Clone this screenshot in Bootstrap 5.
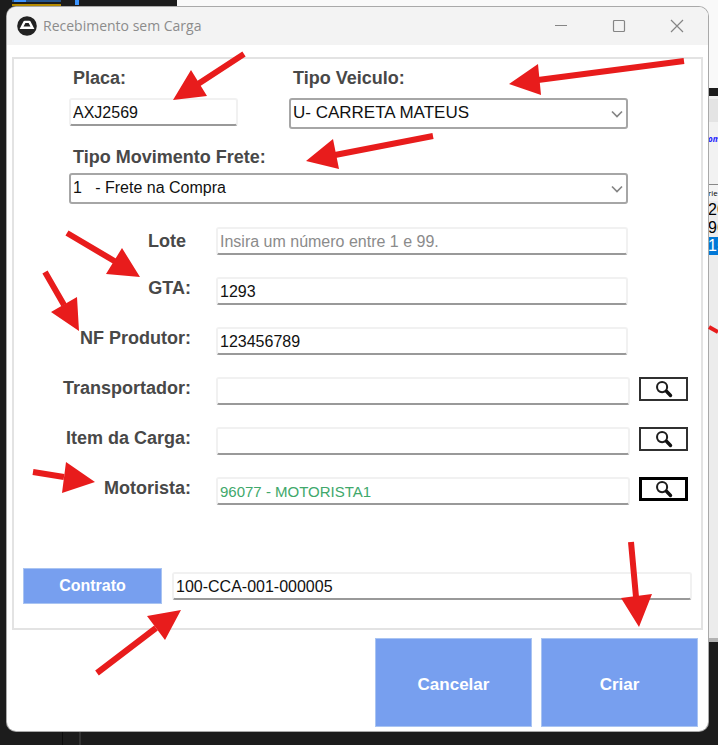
<!DOCTYPE html>
<html lang="pt-BR">
<head>
<meta charset="utf-8">
<meta name="viewport" content="width=device-width, initial-scale=1">
<title>Recebimento sem Carga</title>
<link href="https://cdn.jsdelivr.net/npm/bootstrap@5.3.0/dist/css/bootstrap.min.css" rel="stylesheet">
<style>
body { background: #1c1c1c; font-family: "Liberation Sans", Arial, sans-serif; color: #000; }
.desktop { min-height: 100vh; padding: 7px 10px 14px 7px; }

/* windows behind the dialog */
.code-strip { left: 0; top: 0; width: 177px; height: 7px; }
.back-top { left: 177px; right: 0; top: 0; height: 88px; background: #f9f9f9; }
.back-side { right: 0; top: 88px; width: 10px; height: 554px; background: #ececec; font-size: 16px; line-height: 18px; white-space: nowrap; border-bottom: 4px solid #b2b2b2; }
.back-black { height: 8px; background: #1c1c1c; }
.back-bar { height: 26px; background: #e4e4e4; border-top: 3px solid #f0f0f0; }
.back-link { height: 62px; padding-top: 8px; background: #f2f2f2; color: #1a1aff; font: italic bold 8px/18px "Open Sans", sans-serif; }
.back-head { height: 17px; border-top: 1px solid #888; background: #f4f4f4; font: 8px/15px "Open Sans", sans-serif; }
.back-pick { background: #0078d7; color: #fff; }
.rule-a, .rule-b { bottom: 0; height: 14px; width: 1px; background: #0c0c0c; }
.rule-a { left: 62px; }
.rule-b { left: 79px; width: 2px; background: #333; }

.dialog { background: #fff; border-radius: 9px; box-shadow: 0 0 0 1px #a9a9a9; }
.titlebar { height: 38px; background: #f3f3f3; padding: 0 2px 0 10px; color: #8c8c8c; }
.title-text { font: 400 14px/20px "Open Sans", sans-serif; padding-left: 6px; }
.sys-btn { width: 58px; height: 38px; border: 0; background: none; padding: 0; }
.form-area { margin: 12px 5px 8px; border: 2px solid #e3e3e3; padding: 7px 9px 24px; }

.tag { font-size: 18px; line-height: 24px; font-weight: 700; color: #484848; }
.field { height: 28px; min-width: 0; border: 2px solid #f1f1f1; border-bottom: 2px solid #999; border-radius: 3px; padding: 1px 2px 0; font-size: 16px; line-height: 22px; color: #111; background: #fff; }
.field::placeholder { color: #8b8b8b; opacity: 1; }
.field-green { color: #40a86b; font-size: 15px; }
.pick { height: 31px; width: 100%; appearance: none; border: 2px solid #a6a6a6; border-radius: 3px; padding: 0 28px 2px 2px; font-size: 16px; line-height: 24px; color: #111;
  background: #fff url("data:image/svg+xml,%3Csvg xmlns='http://www.w3.org/2000/svg' viewBox='0 0 12 8'%3E%3Cpath d='M1 1.5 6 6.5 11 1.5' fill='none' stroke='%23858585' stroke-width='1.7'/%3E%3C/svg%3E") no-repeat right 3px center / 12px 8px; }
.pick-large { font-size: 17px; }
.top-block { padding: 0 64px 0 46px; }
.plate { width: 169px; }
.top-gap { gap: 51px; }
.rows { margin-top: 23px; gap: 22px; }
.line { padding-right: 4px; gap: 25px; }
.line .tag { width: 168px; text-align: right; flex: none; height: 24px; }
.line .tag-short { padding-right: 5px; margin-top: 2px; }
.line .tag-up { margin-top: -1px; }
.no-search { margin-right: 60px; }
.search-gap { gap: 9px; }
.search { width: 49px; height: 24px; border: 2px solid #303030; background: #fff; padding: 0; }
.search-focus { border: 3px solid #000; }
.contract { margin-top: 63px; gap: 10px; }
.blue { background: #779fef; border: 1px solid #a9c4f2; color: #fff; font-size: 17px; line-height: 20px; font-weight: 700; padding: 0; }
.blue-sm { width: 139px; height: 36px; font-size: 16px; }
.actions { gap: 9px; padding: 0 10px 4px; }
.blue-lg { width: 157px; height: 89px; padding-top: 4px; }
.arrows { left: 0; top: 0; width: 718px; height: 745px; pointer-events: none; }
</style>
<script src="https://cdn.jsdelivr.net/npm/bootstrap@5.3.0/dist/js/bootstrap.bundle.min.js"></script>
</head>
<body>
<div class="desktop position-relative overflow-hidden">
  <svg class="code-strip position-absolute" viewBox="0 0 177 7" aria-hidden="true">
    <path fill="#24538c" d="M12 0h49v2H12z"/><path fill="#3b94ff" d="M14 0h12v2H14zM75 0h4v5h-4z"/><path fill="#b48a00" d="M12 4h49v2H12z"/>
  </svg>
  <div class="back-top position-absolute"></div>
  <div class="back-side position-absolute overflow-hidden">
    <div class="back-black"></div>
    <div class="back-bar"></div>
    <div class="back-link">om</div>
    <div class="back-head">rie</div>
    <div>20</div>
    <div>96</div>
    <div class="back-pick">15</div>
  </div>
  <div class="rule-a position-absolute"></div>
  <div class="rule-b position-absolute"></div>

  <main class="dialog position-relative overflow-hidden">
    <header class="titlebar d-flex align-items-center">
      <svg width="20" height="20" viewBox="0 0 20 20" aria-hidden="true">
        <circle cx="10" cy="10" r="9.8" fill="#222"/>
        <path d="M7.8 4.800h4.400q1 0 1.500.9l3.700 7.300H2.600l3.700-7.300Q6.800 4.800 7.800 4.800z" fill="#fff"/>
        <path d="M8.400 6.900h3.200l1.900 3.700H6.500z" fill="#222"/>
      </svg>
      <h1 class="title-text mb-0 me-auto">Recebimento sem Carga</h1>
      <button class="sys-btn d-flex align-items-center justify-content-center" type="button" aria-label="Minimizar"><svg width="14" height="14" viewBox="0 0 14 14"><path d="M1 6.500h12" stroke="#858585"/></svg></button>
      <button class="sys-btn d-flex align-items-center justify-content-center" type="button" aria-label="Maximizar"><svg width="14" height="14" viewBox="0 0 14 14"><rect x="1.5" y="1.5" width="11" height="11" rx="1" fill="none" stroke="#858585" stroke-width="1.2"/></svg></button>
      <button class="sys-btn d-flex align-items-center justify-content-center" type="button" aria-label="Fechar"><svg width="14" height="14" viewBox="0 0 14 14"><path d="M1 1l12 12M13 1 1 13" stroke="#858585" stroke-width="1.2"/></svg></button>
    </header>

    <form>
      <div class="form-area">
        <div class="top-block">
          <div class="d-flex top-gap">
            <div class="plate d-flex flex-column">
              <label class="tag mb-2 ps-1" for="placa">Placa:</label>
              <input class="field w-100" id="placa" type="text" value="AXJ2569">
            </div>
            <div class="flex-grow-1 d-flex flex-column">
              <label class="tag mb-2 ps-1" for="veiculo">Tipo Veiculo:</label>
              <select class="pick pick-large" id="veiculo"><option>U- CARRETA MATEUS</option></select>
            </div>
          </div>
          <div class="d-flex flex-column mt-3">
            <label class="tag mb-1 ps-1" for="frete">Tipo Movimento Frete:</label>
            <select class="pick" id="frete"><option>1&nbsp;&nbsp; - Frete na Compra</option></select>
          </div>
        </div>

        <div class="rows d-flex flex-column">
          <div class="line d-flex">
            <label class="tag tag-short" for="lote">Lote</label>
            <input class="field flex-grow-1 no-search" id="lote" type="text" placeholder="Insira um número entre 1 e 99.">
          </div>
          <div class="line d-flex">
            <label class="tag tag-up" for="gta">GTA:</label>
            <input class="field flex-grow-1 no-search" id="gta" type="text" value="1293">
          </div>
          <div class="line d-flex">
            <label class="tag tag-up" for="nf">NF Produtor:</label>
            <input class="field flex-grow-1 no-search" id="nf" type="text" value="123456789">
          </div>
          <div class="line d-flex">
            <label class="tag tag-up" for="transp">Transportador:</label>
            <div class="d-flex flex-grow-1 search-gap">
              <input class="field flex-grow-1" id="transp" type="text">
              <button class="search d-flex align-items-center justify-content-center" type="button" aria-label="Buscar transportador"><svg width="18" height="18" viewBox="0 0 16 16"><circle cx="6.300" cy="6.300" r="4.500" fill="none" stroke="#1d1d1d" stroke-width="1.800"/><path d="m10.200 10 3.600 3.800" stroke="#111" stroke-width="3" stroke-linecap="round"/></svg></button>
            </div>
          </div>
          <div class="line d-flex">
            <label class="tag tag-up" for="item">Item da Carga:</label>
            <div class="d-flex flex-grow-1 search-gap">
              <input class="field flex-grow-1" id="item" type="text">
              <button class="search d-flex align-items-center justify-content-center" type="button" aria-label="Buscar item"><svg width="18" height="18" viewBox="0 0 16 16"><circle cx="6.300" cy="6.300" r="4.500" fill="none" stroke="#1d1d1d" stroke-width="1.800"/><path d="m10.200 10 3.600 3.800" stroke="#111" stroke-width="3" stroke-linecap="round"/></svg></button>
            </div>
          </div>
          <div class="line d-flex">
            <label class="tag tag-up" for="motorista">Motorista:</label>
            <div class="d-flex flex-grow-1 search-gap">
              <input class="field field-green flex-grow-1" id="motorista" type="text" value="96077 - MOTORISTA1">
              <button class="search search-focus d-flex align-items-center justify-content-center" type="button" aria-label="Buscar motorista"><svg width="18" height="18" viewBox="0 0 16 16"><circle cx="6.300" cy="6.300" r="4.500" fill="none" stroke="#1d1d1d" stroke-width="1.800"/><path d="m10.200 10 3.600 3.800" stroke="#111" stroke-width="3" stroke-linecap="round"/></svg></button>
            </div>
          </div>
        </div>

        <div class="contract d-flex align-items-center">
          <button class="blue blue-sm" type="button">Contrato</button>
          <input class="field flex-grow-1" type="text" aria-label="Contrato" value="100-CCA-001-000005">
        </div>
      </div>
      <div class="actions d-flex justify-content-end">
        <button class="blue blue-lg" type="button">Cancelar</button>
        <button class="blue blue-lg" type="submit">Criar</button>
      </div>
    </form>
  </main>

  <!-- annotation arrows over the form -->
  <svg class="arrows position-absolute" viewBox="0 0 718 745" aria-hidden="true">
    <g stroke="#e81c1c" stroke-width="6">
      <path d="M244 54 198 84M684 61 538 80M433 136 335 155M67 233 116 262M45 272 64 305M33 472 64 477M97 673 156 628M631 542 636 597"/>
      <path d="M709 327l9 5" stroke-width="4"/>
    </g>
    <g fill="#e81c1c">
      <path d="M173 100 191 70 207 96zM509 84 538 64 541 95zM306 161 333 139 339 169zM140 277 122 248 106 274zM79 331 77 297 51 312zM95 482 66 462 62 493zM181 610 147 616 165 640zM639 627 621 598 652 594z"/>
    </g>
  </svg>
</div>
</body>
</html>
